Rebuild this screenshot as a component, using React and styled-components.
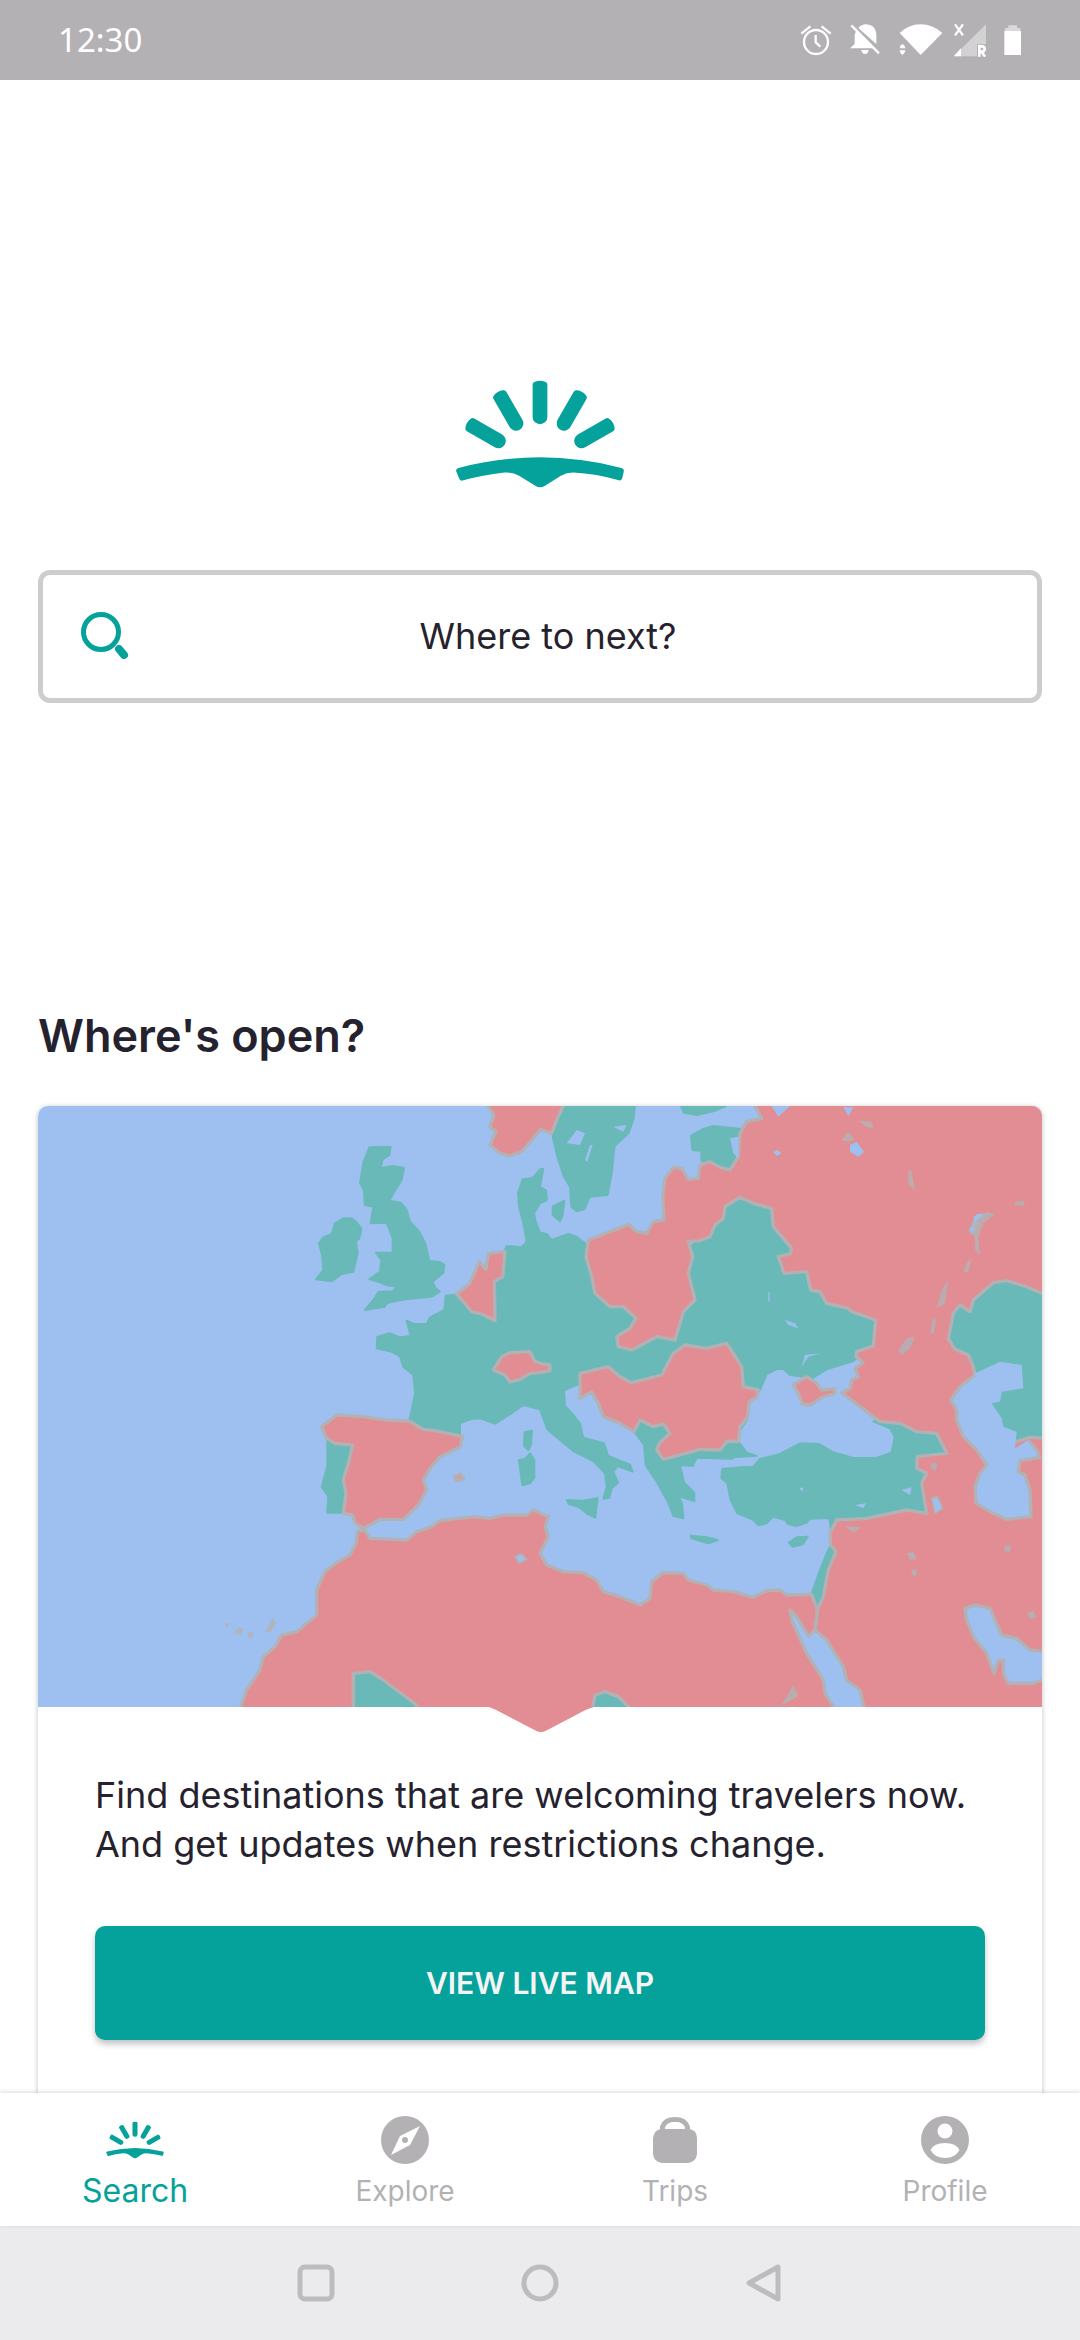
import React from "react";
import styled, { createGlobalStyle } from "styled-components";

const c = {
  teal: "#05a29b",
  ink: "#25222e",
  grey: "#b3b1b4",
  sea: "#9dc0f0",
  open: "#69b9b9",
  closed: "#e28d94",
  edge: "#b3b1b4",
};

const GlobalStyle = createGlobalStyle`
  * { box-sizing: border-box; }
  body { margin: 0; background: #fff; color: ${c.ink}; font-family: Inter, "Liberation Sans", sans-serif; }
  button { font: inherit; border: 0; cursor: pointer; }
`;

const Shell = styled.div`
  display: flex;
  flex-direction: column;
  height: 100vh;
  background: #fff;
`;

const StatusBar = styled.header`
  display: flex;
  flex: none;
  align-items: center;
  justify-content: space-between;
  height: 80px;
  padding: 0 58px;
  background: ${c.grey};
  color: #fff;
`;

const Clock = styled.time`
  font: 400 33px/40px "Noto Sans", sans-serif;
`;

const StatusIcons = styled.div`
  display: flex;
  align-items: center;
  gap: ${(p) => (p.$tight ? 10 : 17)}px;
`;

const Content = styled.main`
  flex: 1;
  min-height: 0;
  padding: 300px 38px 0;
  overflow-y: auto;
  scrollbar-width: none;
`;

const Hero = styled.section`
  display: flex;
  flex-direction: column;
  align-items: center;
  gap: 82px;
`;

const SearchBox = styled.button`
  display: flex;
  align-items: center;
  gap: 16px;
  width: 100%;
  height: 133px;
  padding: 0 86px 2px 38px;
  background: #fff;
  border: 5px solid #cdccce;
  border-radius: 12px;
  color: ${c.ink};
`;

const SearchLabel = styled.span`
  flex: 1;
  font-size: 36px;
  line-height: 48px;
  text-align: center;
`;

const Title = styled.h2`
  margin: 303px 0 40px;
  font-size: 45px;
  font-weight: 600;
  line-height: 60px;
`;

const Card = styled.article`
  overflow: hidden;
  border-radius: 10px;
  background: #fff;
  box-shadow: 0 1px 4px 1px rgba(37, 34, 46, 0.2);
`;

const MapArt = styled.svg`
  display: block;
  width: 100%;
  height: auto;
`;

const CardBody = styled.div`
  padding: 39px 57px 84px;
`;

const CardText = styled.p`
  margin: 0 0 57px;
  font-size: 36px;
  line-height: 49px;
`;

const PrimaryButton = styled.button`
  display: block;
  width: 100%;
  height: 114px;
  border-radius: 10px;
  background: ${c.teal};
  box-shadow: 0 4px 6px rgba(37, 34, 46, 0.28);
  color: #f4f4f6;
  && { font-size: 30px; font-weight: 600; }
`;

const TabBar = styled.nav`
  display: grid;
  flex: none;
  grid-template-columns: repeat(4, 1fr);
  height: 133px;
  background: #fff;
  box-shadow: 0 -1px 4px rgba(37, 34, 46, 0.16);
  position: relative;
`;

const Tab = styled.a`
  display: flex;
  flex-direction: column;
  align-items: center;
  gap: 8px;
  padding-top: 22px;
  color: ${(p) => (p.$active ? c.teal : c.grey)};
  font-size: ${(p) => (p.$active ? 32 : 28)}px;
  line-height: 36px;
  text-decoration: none;
`;

const TabIcon = styled.span`
  display: grid;
  place-items: center;
  width: 60px;
  height: 50px;
`;

const SystemBar = styled.footer`
  display: flex;
  flex: none;
  align-items: center;
  justify-content: center;
  gap: 184px;
  height: 114px;
  background: #ebebed;
`;

const SystemButton = styled.button`
  display: grid;
  place-items: center;
  width: 40px;
  height: 40px;
  padding: 0;
  background: none;
`;

const RAYS = [-60, -30, 0, 30, 60];

function Sunrise({ width, height }) {
  return (
    <svg width={width} height={height} viewBox="78 62 506 322" fill={c.teal} aria-hidden="true">
      {RAYS.map((a) => (
        <path
          key={a}
          transform={`rotate(${a} 331 315)`}
          d="M309 76Q309 69 316 67Q331 61 346 67Q353 69 353 76V172A22 22 0 0 1 309 172Z"
        />
      ))}
      <path d="M88 324Q331 261 574 324Q582 326 581 334L576 356Q574 363 566 361Q500 342 430 338Q410 338 392 348L346 377Q331 386 317 377L270 348Q250 336 225 338Q160 345 100 362Q92 364 90 356L81 334Q80 326 88 324Z" />
    </svg>
  );
}

function AlarmIcon() {
  return (
    <svg width="32" height="32" viewBox="63 74 96 96" fill="none" stroke="#fff" strokeWidth="7" aria-hidden="true">
      <circle cx="111" cy="128" r="36" />
      <path d="M110 107v22l14 13M67 103l27-22M155 103l-27-22" />
    </svg>
  );
}

function BellOffIcon() {
  return (
    <svg width="33" height="32" viewBox="209 74 99 96" aria-hidden="true">
      <path
        fill="#fff"
        d="M212 147L226 134V108Q227 100 231 95L283 147ZM237 86Q246 75 260 75Q288 76 291 104V134L300 142ZM246 152H268Q266 164 257 164Q248 164 246 152Z"
      />
      <path d="M216 78L299 162" stroke="#fff" strokeWidth="7" />
    </svg>
  );
}

function WifiIcon() {
  return (
    <svg width="44" height="32" viewBox="356 74 132 96" fill="#fff" aria-hidden="true">
      <path d="M358 101Q385 75 421 75Q457 75 486 101L421 167ZM358 147Q359 137 366 134Q374 137 375 147ZM358 153H375Q374 163 366 167Q359 163 358 153Z" />
    </svg>
  );
}

function SignalIcon() {
  return (
    <svg width="34" height="34" viewBox="518 70 102 102" fill="#fff" aria-hidden="true">
      <path d="M520 170L617 74V134H590V170Z" opacity="0.42" />
      <path d="M520 170L542 146V170Z" />
      <path d="M524 74L548 107M548 74L524 107" stroke="#fff" strokeWidth="7" />
      <path d="M597 171V140H604Q613 140 613 148Q613 156 604 156H597M604 156L614 171" fill="none" stroke="#fff" strokeWidth="8" />
    </svg>
  );
}

function BatteryIcon() {
  return (
    <svg width="18" height="32" viewBox="671 74 54 96" fill="#fff" aria-hidden="true">
      <path d="M672 95H722V167H672Z" />
      <path d="M674 95V86H684V78H710V86H720V95Z" opacity="0.5" />
    </svg>
  );
}

function SearchIcon() {
  return (
    <svg width="48" height="48" viewBox="0 0 48 48" fill="none" stroke={c.teal} aria-hidden="true">
      <circle cx="20" cy="20" r="17.500" strokeWidth="5" />
      <path d="M38 37L43 43" strokeWidth="8" strokeLinecap="round" />
    </svg>
  );
}

function CompassIcon() {
  return (
    <svg width="48" height="48" viewBox="0 0 48 48" fill={c.grey} aria-hidden="true">
      <circle cx="24" cy="24" r="24" />
      <path d="M39 10L29 29L10 39L19 20Z" fill="#fff" />
      <circle cx="24" cy="24" r="3" />
    </svg>
  );
}

function BagIcon() {
  return (
    <svg width="44" height="46" viewBox="0 0 44 46" fill={c.grey} aria-hidden="true">
      <path d="M8 12H36Q44 13 44 21V37Q43 45 35 46H9Q1 45 0 37V21Q1 13 8 12Z" />
      <path d="M9.500 14V10Q12 2.500 22 2.500Q32 2.500 34.500 10V14" fill="none" stroke={c.grey} strokeWidth="5" />
      <path d="M12 12Q13 5 22 5Q31 5 32 12Z" fill="#fff" />
    </svg>
  );
}

function ProfileIcon() {
  return (
    <svg width="48" height="48" viewBox="0 0 48 48" fill={c.grey} aria-hidden="true">
      <circle cx="24" cy="24" r="24" />
      <circle cx="24" cy="15" r="7.500" fill="#fff" />
      <path d="M9.500 34Q13 27 24 27Q35 27 38.500 34Q34 42 24 42Q14 42 9.500 34Z" fill="#fff" />
    </svg>
  );
}

function EuropeMap() {
  return (
    <MapArt viewBox="24 48 3012 1878" role="img" aria-label="Map of countries open to travelers" strokeLinejoin="round">
      <path fill={c.sea} d="M24 48H3036V1851H24Z" />

      <g fill={c.open} stroke={c.open} strokeWidth="6">
        {/* Great Britain and Ireland */}
        <path d="M1018 172L1082 170L1078 195L1058 208L1052 234L1090 228L1122 234L1115 270L1090 310L1078 332L1112 338L1130 360L1140 395L1168 425L1186 460L1198 513L1230 516L1243 525L1240 548L1208 575L1215 592L1230 605L1205 620L1140 626L1100 632L1070 640L1064 650L1005 660L1030 630L1045 606L1088 604L1100 590L1070 586L1045 575L1018 568L1050 545L1054 510L1038 488L1088 488L1088 445L1070 398L1022 400L1030 350L1004 345L1002 300L990 280L1000 218Z" />
        <path d="M915 400L940 385L965 385L978 395L994 416L988 445L978 455L983 490L970 545L935 552L905 574L858 568L880 540L876 495L867 460L880 442L905 432Z" />
        {/* Continental Europe */}
        <path d="M1530 238L1508 264L1478 268L1464 310L1468 355L1480 400L1490 455L1475 472L1430 468L1400 540L1275 614L1247 617L1243 660L1200 682L1190 702L1150 702L1130 692L1142 738L1110 742L1080 730L1042 740L1040 775L1085 785L1110 800L1120 830L1150 855L1155 910L1145 960L1137 995L1180 1022L1290 1036L1290 1000L1320 988L1350 985L1395 1001L1440 973L1480 945L1530 958L1552 1018L1590 1050L1630 1083L1690 1113L1725 1150L1730 1190L1720 1226L1738 1223L1745 1195L1764 1178L1750 1145L1763 1128L1808 1145L1800 1124L1735 1098L1722 1060L1660 1043L1650 1000L1630 975L1605 948L1602 902L1650 880L1740 960L1900 980L1815 1000L1817 1030L1842 1065L1847 1125L1882 1178L1915 1238L1930 1278L1960 1285L1956 1240L1945 1218L1993 1233L1993 1208L1962 1177L1950 1125L1988 1128L2000 1103L2110 1106L2180 1098L2150 1088L2125 1055L2125 1030L2150 990L2158 940L2190 900L2210 852L2240 837L2260 837L2280 855L2350 863L2390 838L2470 813L2530 770L2535 690L2370 605L2225 355L2130 322L2040 400L1960 500L1700 520L1665 460L1640 440L1615 432L1565 450L1550 432L1530 428L1517 395L1512 370L1530 340L1551 330L1548 302L1530 290L1540 237Z" />
        {/* Portugal */}
        <path d="M892 1050L975 1062L955 1268H892L895 1220L875 1190L892 1130Z" />
        {/* Corsica and Sardinia */}
        <path d="M1484 1027L1506 1022L1503 1065L1495 1080L1482 1068ZM1467 1110L1485 1107L1500 1090L1513 1110V1163L1500 1180L1477 1186Z" />
      </g>

      <g transform="translate(1530 0)" fill={c.open} stroke={c.open} strokeWidth="6">
        {/* Sweden, Zealand, Estonia, Finland */}
        <path d="M60 48H285L280 90L265 130L224 168L215 250L203 315L150 320L133 358L110 364L94 350L90 290L72 260L52 200L38 140Z" />
        <path d="M38 350L73 332L68 376L60 393L38 375Z" />
        <path d="M453 137L490 117L520 108L603 117L598 200L570 238L484 213L484 183L457 180Z" />
        <path d="M422 48H558L520 64L470 75L432 68Z" />
      </g>

      <g transform="translate(1530 930)" fill={c.open} stroke={c.open} strokeWidth="6">
        {/* Turkey, Sicily, Crete, Cyprus */}
        <path d="M547 207L600 202L640 200L660 177L720 162L780 130L838 132L880 157L940 174L1010 174L1055 157L1064 110L1050 85L1000 64L1080 70L1130 90L1190 100L1220 165L1180 180L1180 340L890 360L874 398L868 354L810 356L800 368L770 378L745 372L735 360L700 350L680 370L655 376L637 358L592 340L572 300L562 250L544 235Z" />
        <path d="M80 300L130 302L173 294L166 353L145 343L115 320L87 313Z" />
        <path d="M452 407L500 412L533 420L505 430L455 415ZM747 428L770 412L803 410L788 433L757 440Z" />
        <path d="M870 440L895 455L870 510L850 590L832 640L815 580L840 510L860 460Z" />
      </g>

      <g fill={c.closed} stroke={c.edge} strokeWidth="10">
        {/* Russia, Poland and the Middle East */}
        <path d="M2170 40L2195 85L2150 95L2130 130L2125 200L2100 240L2070 232L2040 215L2010 225L2005 265L1975 268L1955 235L1930 232L1905 265L1898 320L1902 390L1870 395L1850 430L1820 425L1795 403L1740 425L1675 450L1668 500L1685 560L1695 610L1740 650L1780 650L1818 685L1800 715L1760 740L1765 770L1805 780L1880 740L1935 750L1960 665L1995 630L1975 550L1988 500L1975 455L2010 452L2040 440L2055 405L2080 385L2085 350L2130 322L2170 340L2225 355L2230 410L2285 475L2280 492L2245 500L2262 550L2330 545L2342 600L2370 605L2390 640L2455 655L2465 665L2537 690L2530 768L2480 785L2478 800L2500 818L2475 835L2485 860L2465 870L2460 895L2435 908L2490 950L2550 995L2610 1000L2660 1025L2720 1030L2750 1090L2662 1100L2660 1135L2690 1150L2675 1180L2690 1270L2630 1260L2510 1285L2420 1290L2400 1330L2402 1365L2418 1385L2395 1440L2380 1520L2362 1560L2355 1620L2390 1650L2440 1730L2450 1770L2490 1800L2504 1860H3050V40Z" />
        {/* North Africa */}
        <path clipPath="url(#mapArea)" d="M630 1858L650 1800L690 1740L700 1700L735 1670L755 1635L800 1625L860 1575V1500L885 1445L920 1418L960 1395L978 1360L982 1325L1005 1320L1020 1345L1130 1350L1160 1325L1200 1312L1230 1292L1330 1280L1380 1285L1420 1275L1490 1275L1510 1260L1555 1280L1545 1310L1555 1340L1530 1390L1550 1425L1600 1445L1660 1448L1700 1470L1720 1505L1770 1520L1830 1545L1860 1525L1865 1475L1900 1448L1960 1450L1975 1470L2030 1485L2050 1500L2110 1505L2170 1522L2210 1502L2250 1500L2270 1515L2345 1513L2362 1560L2355 1620L2335 1638L2300 1580L2280 1560L2285 1590L2330 1690L2380 1770L2385 1810L2415 1858Z" />
        {/* Spain and the Balearics */}
        <path d="M875 1010L920 975L1000 980L1070 990L1137 993L1180 1018L1215 1022L1275 1035L1298 1040L1290 1070L1230 1100L1200 1135L1180 1170L1190 1200L1165 1245L1120 1288H1050L1000 1315L975 1300L968 1275L940 1270L948 1210L940 1170L955 1120L968 1065L915 1060L890 1045Z" />
        <path d="M1274 1160L1290 1152L1302 1165L1280 1172Z" />
        {/* Low Countries, Switzerland, Norway */}
        <path d="M1280 612L1318 582L1348 515L1368 538L1375 490L1425 485L1418 560L1393 575L1395 692L1355 672L1325 665Z" />
        <path d="M1390 840L1415 800L1440 788L1500 785L1515 815L1540 822L1560 825V842L1530 848L1500 850L1470 868L1440 876L1425 855Z" />
        <path d="M1370 42L1392 75L1380 110L1398 125L1380 165L1410 190L1440 198L1475 185L1510 145L1532 118L1565 130L1578 95L1602 42Z" />
        {/* Balkans */}
        <path transform="translate(1530 0)" d="M120 850L205 830L240 860L275 878L365 855L400 790L435 765L500 775L560 760L580 790L605 830L610 890L655 900L650 922L628 935L622 982L600 1010L595 1055L562 1053L540 1080L480 1078L370 1108L350 1080L358 1060L390 1030L370 1002L340 1010L300 990L282 1025L240 1000L190 980L175 940L155 905L120 925Z" />
        {/* Crimea */}
        <path transform="translate(1530 0)" d="M760 885L800 860L830 880L845 900L885 896L882 912L850 920L810 945L787 942L775 910Z" />
        {/* Mali, Chad, Kazakhstan */}
        <path fill={c.open} transform="translate(0 930)" d="M970 940V820L1020 815L1060 840L1160 915V940Z" clipPath="url(#mapAreaLow)" />
        <path fill={c.open} transform="translate(1530 930)" d="M155 940L165 885L195 875L235 890L285 940Z" clipPath="url(#mapAreaLow)" />
        <path fill={c.open} d="M3050 616L2990 590L2930 572L2890 578L2830 630L2820 665L2790 645L2770 670L2755 745L2775 778L2815 795L2830 830L2835 855L2900 1040L2960 1055L3000 1042L3050 1045Z" />
        {/* Caspian Sea and Persian Gulf */}
        <path fill={c.sea} stroke="none" d="M2835 850L2910 815L2975 825L2980 895L2915 905L2910 935L2885 940L2915 985L2920 1010L2960 1025L2955 1075L2995 1050L3020 1080L3030 1100L2970 1110L2965 1145L2985 1155L3000 1200L3003 1280L2930 1288L2880 1265L2838 1240L2835 1190L2850 1150L2870 1125L2840 1080L2800 1040L2780 990L2780 960L2762 930L2790 890Z" />
        <path fill="none" d="M2835 855L2790 890L2762 930L2780 960L2780 990L2800 1040L2840 1080L2870 1125L2850 1150L2835 1190L2838 1240L2880 1265L2930 1288L3003 1280L3000 1200L2985 1155L2965 1145L2970 1112L3030 1102L3020 1080L2998 1052" />
        <path fill={c.sea} transform="translate(1530 930)" d="M1275 625L1305 615L1350 625L1385 705L1430 715L1470 750L1520 755V835L1480 850L1405 850L1390 820V780L1375 782L1362 820L1340 760L1300 710L1280 660Z" />
      </g>

      {/* Lakes, inlets and small islands */}
      <g transform="translate(1530 0)" fill={c.sea}>
        <path d="M695 48H750L715 80ZM910 52H940L925 78ZM570 145L595 140V205L580 190ZM80 160L110 120L135 130L120 165ZM220 110L260 105L250 125ZM150 165L158 165L142 215L135 210Z" />
        <path d="M930 165L950 155L972 185L955 200L930 185ZM700 185L712 180L725 190L710 198ZM1310 372L1340 374L1320 385L1305 430L1285 425ZM735 690L765 700L775 715L745 705ZM795 795L845 790L805 800L785 830ZM685 606V635H689V606Z" />
      </g>
      <g fill={c.edge} opacity="0.85">
        <path d="M2870 365L2895 372L2860 400L2845 440L2850 495L2835 480L2835 440L2815 425L2832 385ZM2635 240L2645 245L2655 300L2635 285ZM2435 150L2455 125L2475 150L2455 155ZM2485 92L2525 95L2530 115L2510 110ZM2605 780L2630 745L2655 740L2640 775L2615 795ZM2735 600L2755 570L2745 640L2720 655ZM2810 520L2825 505L2815 545L2800 548ZM2700 730L2710 680L2718 690L2712 730ZM2955 335L2985 332L2980 348L2955 345Z" />
        <path d="M610 1630L628 1612L642 1618L630 1635ZM652 1628L670 1626L668 1645L656 1642ZM705 1628L728 1582L738 1600L722 1625ZM582 1600L598 1600L590 1614ZM2255 1845L2290 1785L2305 1818L2275 1835ZM2630 1390L2650 1385L2660 1408L2640 1410ZM2645 1438L2662 1440L2658 1458L2645 1455ZM2922 1368L2942 1365L2940 1385L2925 1385ZM2990 1570L3010 1562L3020 1582L3000 1588ZM2445 1308L2495 1312L2470 1328ZM2700 1120L2722 1118L2718 1142L2705 1138Z" />
      </g>
      <g fill={c.sea} stroke={c.edge} strokeWidth="5">
        <path d="M2705 1225L2722 1220L2738 1255L2715 1270ZM1455 1400L1475 1392L1490 1408L1468 1420Z" />
      </g>
      <path fill={c.sea} d="M2832 378L2860 370L2850 382L2832 395ZM2818 415L2832 410L2828 428ZM2110 1105L2180 1100L2165 1125L2100 1130ZM2615 1200L2645 1192L2640 1215ZM2475 1245L2508 1240L2500 1255ZM2308 1195L2320 1192L2318 1205Z" />

      <defs>
        <clipPath id="mapArea">
          <path d="M24 48H3036V1851H24Z" />
        </clipPath>
        <clipPath id="mapAreaLow">
          <path d="M-1600 0H3036V921H-1600Z" />
        </clipPath>
      </defs>

      {/* Pointer under the map */}
      <path fill="#fff" d="M24 1851H3036V1926H24Z" />
      <path fill={c.closed} d="M1375 1850H1695Q1680 1853 1665 1861L1548 1922Q1532 1930 1518 1922L1400 1861Q1385 1853 1375 1850Z" />
    </MapArt>
  );
}

const TABS = [
  { label: "Search", icon: <Sunrise width={58} height={38} />, active: true },
  { label: "Explore", icon: <CompassIcon /> },
  { label: "Trips", icon: <BagIcon /> },
  { label: "Profile", icon: <ProfileIcon /> },
];

const SYSTEM = [
  { label: "Recent apps", shape: <rect x="4" y="4" width="32" height="32" rx="5" /> },
  { label: "Home", shape: <circle cx="20" cy="20" r="16" /> },
  { label: "Back", shape: <path d="M5 20L34 4V36Z" /> },
];

export default function App() {
  return (
    <Shell>
      <GlobalStyle />
      <StatusBar>
        <Clock>12:30</Clock>
        <StatusIcons>
          <AlarmIcon />
          <BellOffIcon />
          <StatusIcons $tight>
            <WifiIcon />
            <SignalIcon />
          </StatusIcons>
          <BatteryIcon />
        </StatusIcons>
      </StatusBar>
      <Content>
        <Hero>
          <Sunrise width={170} height={108} />
          <SearchBox type="button">
            <SearchIcon />
            <SearchLabel>Where to next?</SearchLabel>
          </SearchBox>
        </Hero>
        <Title>Where's open?</Title>
        <Card>
          <EuropeMap />
          <CardBody>
            <CardText>
              Find destinations that are welcoming travelers now. And get updates when restrictions change.
            </CardText>
            <PrimaryButton type="button">VIEW LIVE MAP</PrimaryButton>
          </CardBody>
        </Card>
      </Content>
      <TabBar>
        {TABS.map((t) => (
          <Tab key={t.label} href={`#${t.label.toLowerCase()}`} $active={t.active}>
            <TabIcon>{t.icon}</TabIcon>
            {t.label}
          </Tab>
        ))}
      </TabBar>
      <SystemBar>
        {SYSTEM.map((s) => (
          <SystemButton key={s.label} type="button" aria-label={s.label}>
            <svg width="40" height="40" fill="none" stroke="#bdbbbe" strokeWidth="5" strokeLinejoin="round">
              {s.shape}
            </svg>
          </SystemButton>
        ))}
      </SystemBar>
    </Shell>
  );
}
